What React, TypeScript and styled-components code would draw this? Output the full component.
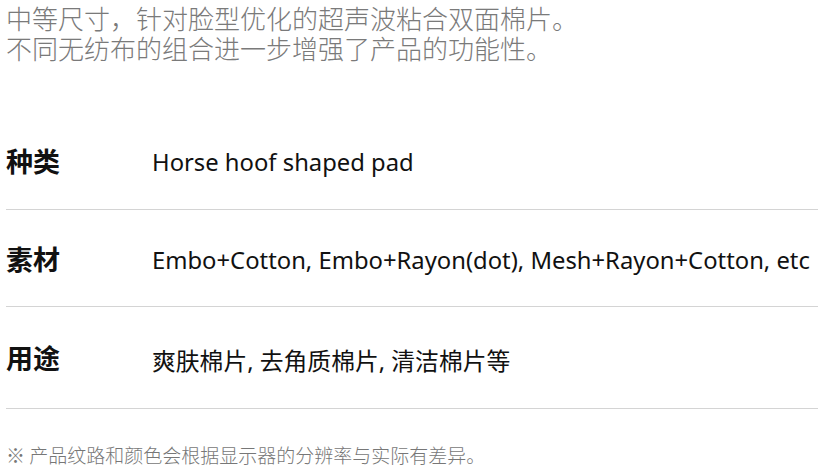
import React from "react";
import styled, { createGlobalStyle } from "styled-components";

const GlobalStyle = createGlobalStyle`
    body {
        margin: 0;
        background: #fff;
        font-family: "Noto Sans", "Noto Sans CJK SC", sans-serif;
    }
`;

const Page = styled.div`
    padding: 3px 7px 0 6px;
`;

const Intro = styled.p`
    margin: 0;
    font-size: 26px;
    line-height: 30px;
    color: #7a7a7a;
    font-family: "Noto Sans CJK SC", sans-serif;
    font-weight: 300;
`;

const Table = styled.div`
    margin-top: 48px;
    display: flex;
    flex-direction: column;
`;

const Row = styled.div<{ $h: number }>`
    display: grid;
    grid-template-columns: 146px 1fr;
    align-items: center;
    height: ${(p) => p.$h}px;
    border-bottom: 1px solid #d4d4d4;
`;

const Label = styled.div`
    font-size: 27px;
    font-weight: 700;
    color: #111;
    font-family: "Noto Sans CJK SC", sans-serif;
`;

const Value = styled.div`
    padding-top: 3px;
    font-size: 23.8px;
    color: #111;
    white-space: nowrap;
    font-family: "Noto Sans", "Noto Sans CJK SC", sans-serif;
`;

const Note = styled.p`
    margin: 33px 0 0;
    font-size: 19px;
    line-height: 26px;
    color: #777;
    font-family: "Noto Sans CJK SC", sans-serif;
    font-weight: 300;
`;

const specs = [
    { label: "种类", value: "Horse hoof shaped pad", h: 98 },
    { label: "素材", value: "Embo+Cotton, Embo+Rayon(dot), Mesh+Rayon+Cotton, etc", h: 96 },
    { label: "用途", value: "爽肤棉片, 去角质棉片, 清洁棉片等", h: 101 },
];

export default function App() {
    return (
        <Page>
            <GlobalStyle />
            <Intro>
                中等尺寸，针对脸型优化的超声波粘合双面棉片。
                <br />
                不同无纺布的组合进一步增强了产品的功能性。
            </Intro>
            <Table>
                {specs.map((s) => (
                    <Row key={s.label} $h={s.h}>
                        <Label>{s.label}</Label>
                        <Value>{s.value}</Value>
                    </Row>
                ))}
            </Table>
            <Note>※ 产品纹路和颜色会根据显示器的分辨率与实际有差异。</Note>
        </Page>
    );
}
